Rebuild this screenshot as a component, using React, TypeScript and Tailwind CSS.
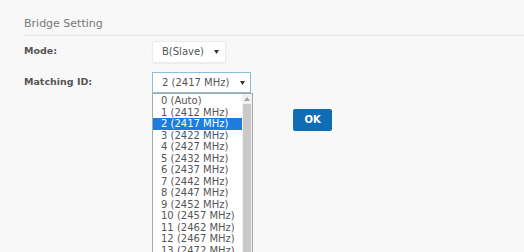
import { useState } from "react";

const channels = [
	"0 (Auto)",
	"1 (2412 MHz)",
	"2 (2417 MHz)",
	"3 (2422 MHz)",
	"4 (2427 MHz)",
	"5 (2432 MHz)",
	"6 (2437 MHz)",
	"7 (2442 MHz)",
	"8 (2447 MHz)",
	"9 (2452 MHz)",
	"10 (2457 MHz)",
	"11 (2462 MHz)",
	"12 (2467 MHz)",
	"13 (2472 MHz)",
];

function Caret() {
	return (
		<svg width="5" height="4" viewBox="0 0 5 4" className="shrink-0">
			<path d="M0 0 L5 0 L2.5 4 Z" fill="#333" />
		</svg>
	);
}

export default function App() {
	const [selected] = useState(2);

	return (
		<div
			className="w-[524px] h-[252px] overflow-hidden bg-[#f8f8f8] text-[#444]"
			style={{ fontFamily: '"DejaVu Sans", Verdana, sans-serif' }}
		>
			<div className="pl-6 pt-[17px]">
				<div className="text-[11px] leading-[14px] text-[#777] pb-[4px] border-b border-[#e4e4e4] shadow-[0_-3px_4px_-3px_rgba(0,0,0,0.04)_inset]">
					Bridge Setting
				</div>

				<div className="flex items-center mt-[4px] h-[23px]">
					<div className="w-[128px] text-[9.5px] font-bold text-[#555]">Mode:</div>
					<div className="w-[74px] h-[22px] bg-white border border-[#ececec] rounded-[2px] shadow-[0_1px_2px_rgba(0,0,0,0.06)] flex items-center justify-between pl-[9px] pr-[6px] text-[10px] text-[#555]">
						<span>B(Slave)</span>
						<Caret />
					</div>
				</div>

				<div className="flex items-center mt-[9px] h-[21px]">
					<div className="w-[128px] text-[9.5px] font-bold text-[#555]">Matching ID:</div>
					<div className="relative">
						<div className="w-[99px] h-[21px] bg-white border border-[#8fbfd8] flex items-center justify-between pl-[9px] pr-[5px] text-[10px] text-[#555]">
							<span>2 (2417 MHz)</span>
							<Caret />
						</div>
						<div className="absolute left-0 top-[21px] w-[101px] h-[170px] bg-white border border-[#a8a8a8] flex z-10">
							<div className="flex-1 pt-[1px]">
								{channels.map((c, i) => (
									<div
										key={c}
										className={
											"h-[11.5px] leading-[11.5px] text-[10px] pl-[8px] whitespace-nowrap " +
											(i === selected ? "bg-[#1e7ddc] text-white" : "text-[#555]")
										}
									>
										{c}
									</div>
								))}
							</div>
							<div className="w-[10px] bg-[#f1f1f1] flex flex-col items-center">
								<svg width="6" height="4" viewBox="0 0 6 4" className="mt-[3px]">
									<path d="M0 4 L3 0 L6 4 Z" fill="#a3a3a3" />
								</svg>
								<div className="mt-[3px] w-[8px] flex-1 bg-[#c9c9c9]" />
							</div>
						</div>
					</div>
				</div>

				<div className="mt-[13px] pl-[269px]">
					<button className="w-[39px] h-[22px] bg-[#0f6db5] rounded-[2px] text-white text-[10px] font-bold">
						OK
					</button>
				</div>
			</div>
		</div>
	);
}
